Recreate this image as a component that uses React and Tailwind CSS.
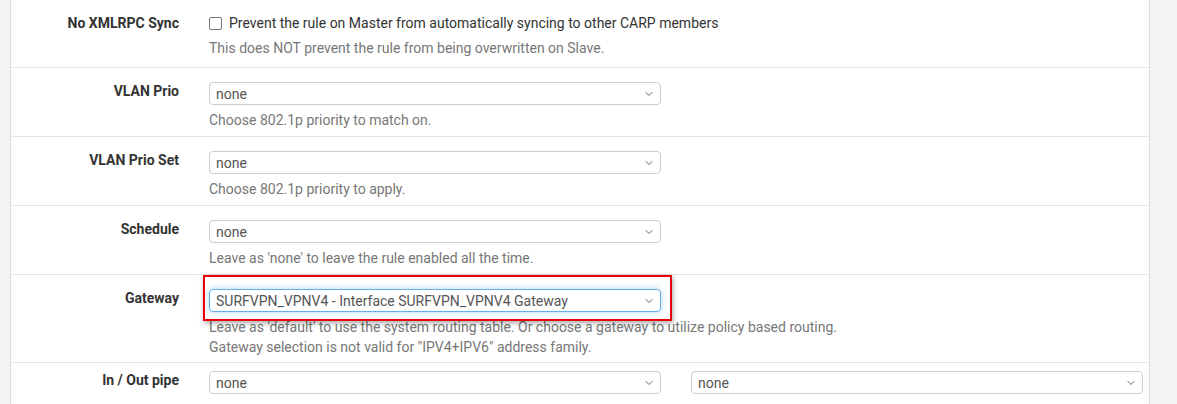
import { LuChevronDown } from "react-icons/lu";

const Select = ({ value, focused }) => (
  <div
    className={`flex h-[23px] w-[452px] items-center justify-between rounded-[4px] border bg-white pl-[6px] pr-[5px] text-[14px] text-[#555] ${
      focused
        ? "border-[#66afe9] shadow-[0_0_6px_rgba(102,175,233,0.5)]"
        : "border-[#ccc]"
    }`}
  >
    <span className="leading-none">{value}</span>
    <LuChevronDown className="h-[12px] w-[12px] text-[#666]" strokeWidth={2} />
  </div>
);

const Help = ({ children }) => (
  <p className="mt-[5px] text-[14px] leading-[20px] text-[#777]">{children}</p>
);

const Row = ({ label, first, last, tall, children }) => (
  <div
    className={`flex ${
      first
        ? "pt-[13px] pb-[9px]"
        : last
        ? "border-t border-[#e3e3e3] pt-[8px] pb-[6px]"
        : tall
        ? "border-t border-[#e3e3e3] pt-[14px] pb-[5px]"
        : "border-t border-[#e3e3e3] pt-[14px] pb-[6px]"
    }`}
  >
    <div
      className={`w-[183px] shrink-0 pr-[15px] text-right ${
        first ? "-mt-[2px]" : "-mt-[3px]"
      }`}
    >
      <span className="text-[14px] font-bold leading-[20px] text-[#333]">
        {label}
      </span>
    </div>
    <div className="pl-[15px]">{children}</div>
  </div>
);

export default function App() {
  return (
    <div
      className="flex h-[404px] w-[1177px] overflow-hidden bg-[#f3f3f3]"
      style={{ fontFamily: "Roboto, 'Liberation Sans', sans-serif" }}
    >
      <div className="ml-[10px] w-[1140px] border-x border-[#dcdcdc] bg-white">
        <Row label="No XMLRPC Sync" first>
          <label className="flex items-center gap-[7px] text-[14px] leading-[20px] text-[#333]">
            <span className="h-[13px] w-[13px] rounded-[2px] border border-[#767676] bg-white" />
            Prevent the rule on Master from automatically syncing to other CARP members
          </label>
          <Help>This does NOT prevent the rule from being overwritten on Slave.</Help>
        </Row>

        <Row label="VLAN Prio">
          <Select value="none" />
          <Help>Choose 802.1p priority to match on.</Help>
        </Row>

        <Row label="VLAN Prio Set">
          <Select value="none" />
          <Help>Choose 802.1p priority to apply.</Help>
        </Row>

        <Row label="Schedule">
          <Select value="none" />
          <Help>Leave as 'none' to leave the rule enabled all the time.</Help>
        </Row>

        <Row label="Gateway" tall>
          <div className="relative w-fit">
            <Select value="SURFVPN_VPNV4 - Interface SURFVPN_VPNV4 Gateway" focused />
            {/* annotation box */}
            <div className="pointer-events-none absolute -top-[14px] -bottom-[9px] -left-[6px] -right-[11px] border-2 border-[#e8000b] shadow-[1px_2px_5px_rgba(0,0,0,0.35)]" />
          </div>
          <Help>
            Leave as 'default' to use the system routing table. Or choose a gateway to utilize policy based routing.
            <br />
            Gateway selection is not valid for "IPV4+IPV6" address family.
          </Help>
        </Row>

        <Row label="In / Out pipe" last>
          <div className="flex gap-[30px]">
            <Select value="none" />
            <Select value="none" />
          </div>
        </Row>
      </div>
    </div>
  );
}
